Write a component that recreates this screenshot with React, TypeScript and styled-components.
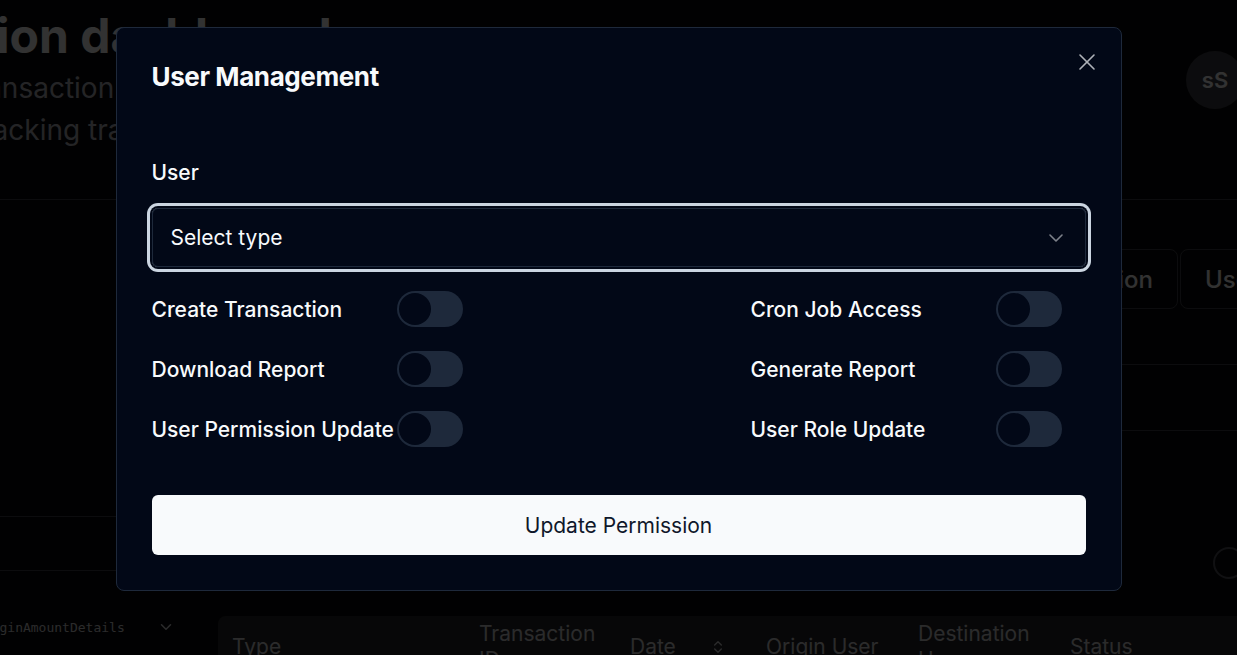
import React from "react";
import styled, { createGlobalStyle } from "styled-components";
import { X, ChevronDown, ChevronsUpDown } from "lucide-react";

const GlobalStyle = createGlobalStyle`
  * { box-sizing: border-box; }
  html, body { margin: 0; padding: 0; background: #09090b; }
  body { font-family: Inter, "Noto Sans", sans-serif; color: #fafafa; overflow: hidden; }
`;

/* ---------- background dashboard ---------- */
const Page = styled.div`
  width: 1237px;
  height: 655px;
  overflow: hidden;
  background: #09090b;
`;

const Header = styled.header`
  display: flex;
  justify-content: space-between;
  align-items: flex-start;
  height: 200px;
  padding-top: 8px;
  border-bottom: 1px solid #3f3f46;
`;

const TitleBlock = styled.div`
  margin-left: -210px;
  white-space: nowrap;
`;

const PageTitle = styled.h1`
  margin: 0;
  font-size: 48px;
  line-height: 56px;
  font-weight: 700;
  color: #fafafa;
`;

const Subtitle = styled.p`
  margin: 0;
  font-size: 28px;
  line-height: 42px;
  color: #b4b4bc;
  &:first-of-type { margin-top: 3px; }
`;

const Avatar = styled.div`
  width: 58px;
  height: 58px;
  margin-top: 43px;
  margin-right: -7px;
  border-radius: 50%;
  background: #3f3f46;
  color: #fafafa;
  display: flex;
  align-items: center;
  justify-content: center;
  font-size: 22px;
  font-weight: 600;
`;

const Body = styled.div`
  display: grid;
  grid-template-columns: 200px 1fr;
  column-gap: 18px;
`;

const Sidebar = styled.aside`
  padding-top: 316px;
  display: flex;
  flex-direction: column;
`;

const SideRow = styled.div`
  height: 55px;
  border-top: 1px solid #3f3f46;
  border-bottom: 1px solid #3f3f46;
`;

const FieldSelect = styled.div`
  margin-top: 46px;
  margin-left: -24px;
  height: 20px;
  display: flex;
  align-items: center;
  gap: 32px;
  font-family: "DejaVu Sans Mono", monospace;
  font-size: 13px;
  color: #d4d4d8;
`;

const Main = styled.main`
  display: flex;
  flex-direction: column;
  min-width: 0;
`;

const Tabs = styled.div`
  margin-top: 49px;
  margin-right: -204px;
  display: flex;
  justify-content: flex-end;
  gap: 2px;
`;

const Tab = styled.div`
  height: 60px;
  padding: 0 24px;
  display: flex;
  align-items: center;
  border: 1px solid #3f3f46;
  border-radius: 8px;
  font-size: 24px;
  font-weight: 500;
  color: #fafafa;
  white-space: nowrap;
`;

const FilterRow = styled.div`
  margin-top: 55px;
  height: 67px;
  border-top: 1px solid #3f3f46;
  border-bottom: 1px solid #3f3f46;
`;

const ToggleLine = styled.div`
  margin-top: 116px;
  margin-right: -8px;
  display: flex;
  justify-content: flex-end;
`;

const Ring = styled.div`
  width: 32px;
  height: 32px;
  border-radius: 50%;
  border: 2px solid #52525b;
`;

const TableHead = styled.div`
  margin-top: 37px;
  height: 62px;
  display: grid;
  grid-template-columns: 247px 151px 136px 152px 152px 1fr;
  align-items: center;
  padding-left: 14px;
  background: #27272a;
  border-radius: 8px 0 0 0;
  font-size: 21px;
  line-height: 26px;
  color: #d4d4d8;
`;

const HeadCell = styled.div`
  display: flex;
  align-items: center;
  gap: 34px;
  padding-right: 16px;
`;

/* ---------- dialog ---------- */
const Overlay = styled.div`
  position: fixed;
  inset: 0;
  background: rgba(0, 0, 0, 0.8);
`;

const DialogLayer = styled.div`
  position: fixed;
  inset: 0;
  display: flex;
  justify-content: center;
  align-items: flex-start;
  padding-top: 27px;
`;

const Dialog = styled.div`
  position: relative;
  width: 1006px;
  background: #020817;
  border: 1px solid #1e293b;
  border-radius: 8px;
  padding: 35px;
  display: flex;
  flex-direction: column;
  color: #f8fafc;
`;

const CloseButton = styled.button`
  position: absolute;
  top: 20px;
  right: 20px;
  background: none;
  border: none;
  padding: 0;
  color: #f8fafc;
  opacity: 0.7;
  display: flex;
`;

const DialogTitle = styled.h2`
  margin: 0;
  font-size: 26px;
  line-height: 28px;
  font-weight: 700;
  letter-spacing: -0.4px;
`;

const FieldLabel = styled.label`
  margin-top: 68px;
  font-size: 21px;
  line-height: 28px;
  font-weight: 500;
`;

const SelectTrigger = styled.div`
  margin-top: 21px;
  height: 59px;
  border: 1px solid #1e293b;
  border-radius: 6px;
  padding: 0 17px 0 18px;
  display: flex;
  align-items: center;
  justify-content: space-between;
  font-size: 21px;
  box-shadow: 0 0 0 2px #020817, 0 0 0 5px #cbd5e1;
`;

const ChevronBox = styled.span`
  display: flex;
  opacity: 0.5;
`;

const PermissionGrid = styled.div`
  margin-top: 24px;
  display: grid;
  grid-template-columns: 1fr 1fr;
  column-gap: 264px;
  row-gap: 24px;
`;

const PermissionItem = styled.div`
  display: flex;
  align-items: center;
`;

const PermissionLabel = styled.span`
  min-width: 245px;
  font-size: 21px;
  font-weight: 500;
  white-space: nowrap;
`;

const Switch = styled.span<{ $on?: boolean }>`
  width: 66px;
  height: 36px;
  border-radius: 18px;
  padding: 2px;
  background: ${(p) => (p.$on ? "#f8fafc" : "#1e293b")};
  display: flex;
  justify-content: ${(p) => (p.$on ? "flex-end" : "flex-start")};
  flex-shrink: 0;
`;

const Thumb = styled.span`
  width: 32px;
  height: 32px;
  border-radius: 50%;
  background: #020817;
`;

const PrimaryButton = styled.button`
  margin-top: 48px;
  height: 60px;
  border: none;
  border-radius: 6px;
  background: #f8fafc;
  color: #0f172a;
  font-family: Inter, sans-serif;
  font-size: 21px;
  font-weight: 400;
`;

const permissions = [
  "Create Transaction",
  "Cron Job Access",
  "Download Report",
  "Generate Report",
  "User Permission Update",
  "User Role Update",
];

export default function App() {
  return (
    <>
      <GlobalStyle />
      <Page>
        <Header>
          <TitleBlock>
            <PageTitle>Transaction dashboard</PageTitle>
            <Subtitle>Monitor your transaction data</Subtitle>
            <Subtitle>Helpful when tracking transactions</Subtitle>
          </TitleBlock>
          <Avatar>sS</Avatar>
        </Header>
        <Body>
          <Sidebar>
            <SideRow />
            <FieldSelect>
              originAmountDetails
              <ChevronDown size={18} strokeWidth={2} />
            </FieldSelect>
          </Sidebar>
          <Main>
            <Tabs>
              <Tab>Transaction</Tab>
              <Tab>User Management</Tab>
            </Tabs>
            <FilterRow />
            <ToggleLine>
              <Ring />
            </ToggleLine>
            <TableHead>
              <HeadCell>Type</HeadCell>
              <HeadCell>Transaction ID</HeadCell>
              <HeadCell>
                Date <ChevronsUpDown size={16} />
              </HeadCell>
              <HeadCell>Origin User</HeadCell>
              <HeadCell>Destination User</HeadCell>
              <HeadCell>Status</HeadCell>
            </TableHead>
          </Main>
        </Body>
      </Page>
      <Overlay />
      <DialogLayer>
        <Dialog role="dialog">
          <DialogTitle>User Management</DialogTitle>
          <CloseButton aria-label="Close">
            <X size={28} strokeWidth={1.4} />
          </CloseButton>
          <FieldLabel>User</FieldLabel>
          <SelectTrigger>
            Select type
            <ChevronBox>
              <ChevronDown size={24} strokeWidth={1.6} />
            </ChevronBox>
          </SelectTrigger>
          <PermissionGrid>
            {permissions.map((p) => (
              <PermissionItem key={p}>
                <PermissionLabel>{p}</PermissionLabel>
                <Switch>
                  <Thumb />
                </Switch>
              </PermissionItem>
            ))}
          </PermissionGrid>
          <PrimaryButton>Update Permission</PrimaryButton>
        </Dialog>
      </DialogLayer>
    </>
  );
}
